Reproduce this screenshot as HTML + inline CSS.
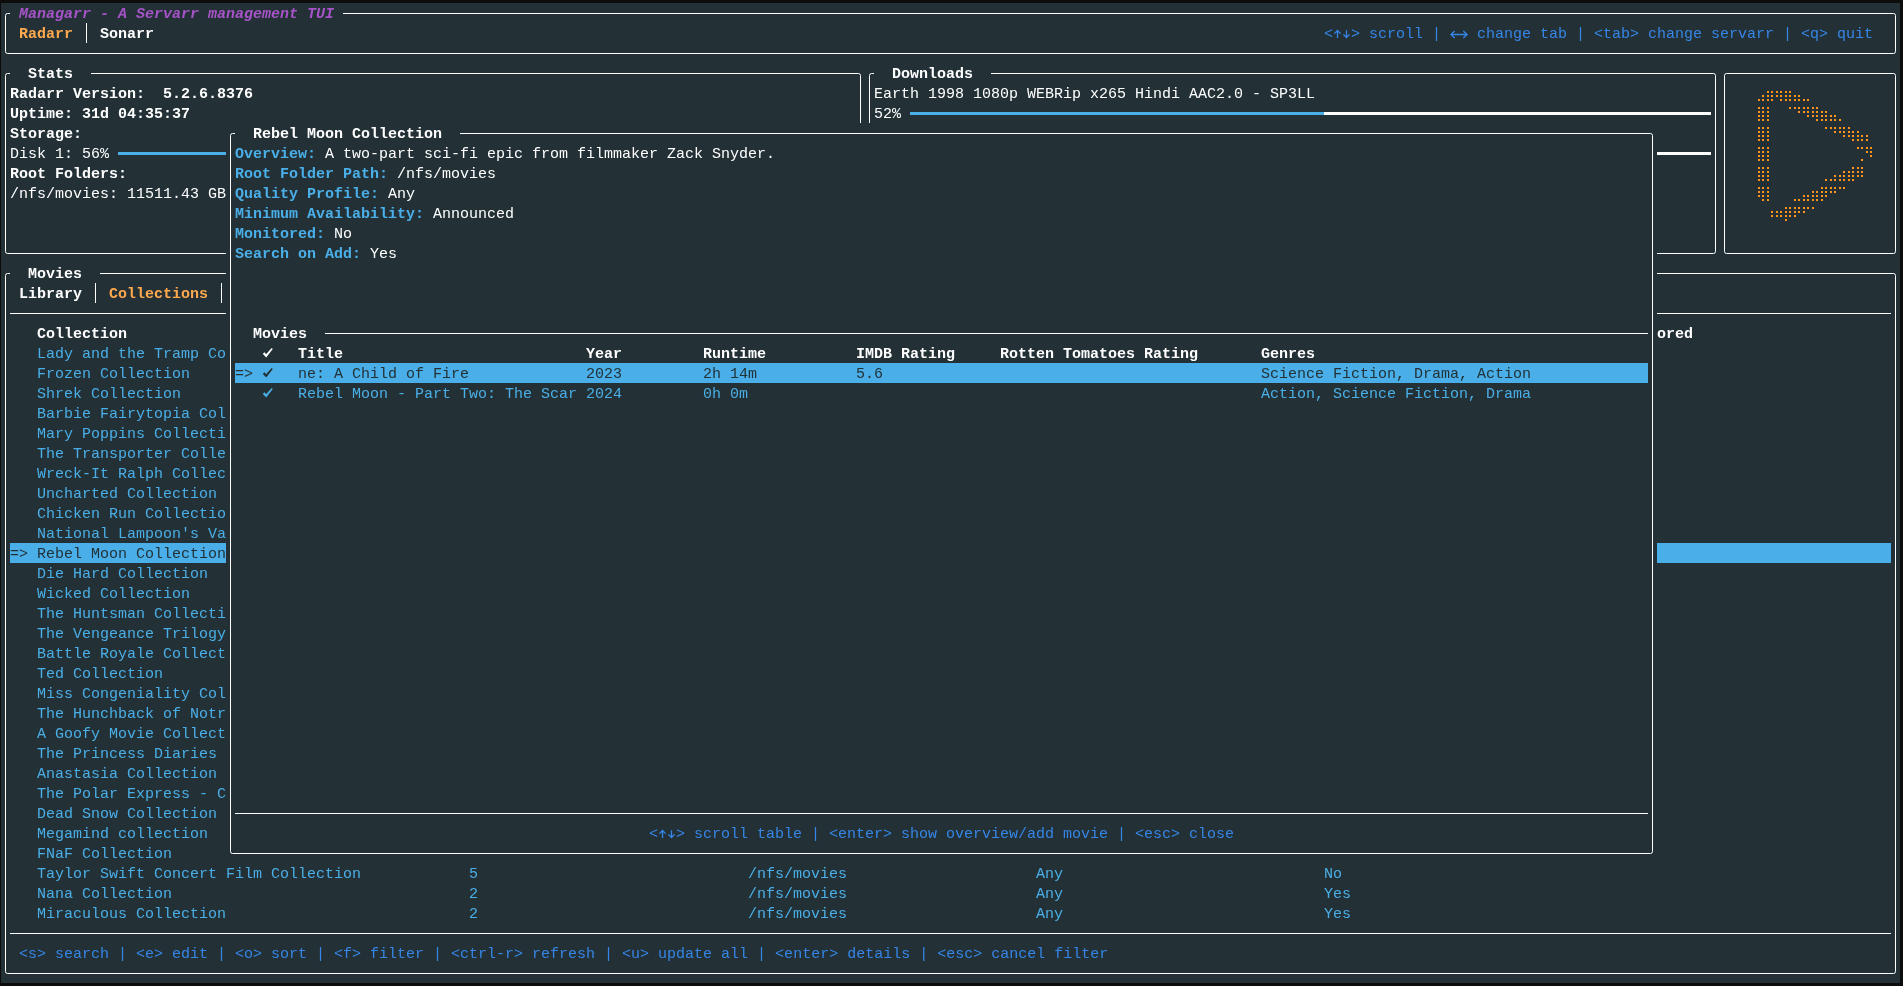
<!DOCTYPE html>
<html><head><meta charset="utf-8"><style>
html,body{margin:0;padding:0;background:#0c0c0c;width:1903px;height:986px;overflow:hidden}
#term{position:absolute;left:1px;top:3px;width:1899px;height:980px;background:#233136}
.t{will-change:transform;position:absolute;white-space:pre;font-family:"Liberation Mono",monospace;font-size:15px;line-height:20px;height:20px}
</style></head><body>
<div id="term"></div>
<div style="position:absolute;left:10px;top:543px;width:216px;height:20px;background:#4aafe8"></div>
<div style="position:absolute;left:1657px;top:543px;width:234px;height:20px;background:#4aafe8"></div>
<svg width="1903" height="986" style="position:absolute;left:0;top:0" shape-rendering="crispEdges"><path d="M5.5 23 V15.5 Q5.5 13.5 7.5 13.5 H10" fill="none" stroke="#ffffff" stroke-width="1" shape-rendering="geometricPrecision"/><path d="M1891 13.5 H1893.5 Q1895.5 13.5 1895.5 15.5 V23" fill="none" stroke="#ffffff" stroke-width="1" shape-rendering="geometricPrecision"/><path d="M5.5 43 V51.5 Q5.5 53.5 7.5 53.5 H10" fill="none" stroke="#ffffff" stroke-width="1" shape-rendering="geometricPrecision"/><path d="M1891 53.5 H1893.5 Q1895.5 53.5 1895.5 51.5 V43" fill="none" stroke="#ffffff" stroke-width="1" shape-rendering="geometricPrecision"/><rect x="343" y="13" width="1548" height="1" fill="#ffffff"/><rect x="10" y="53" width="1881" height="1" fill="#ffffff"/><rect x="5" y="23" width="1" height="20" fill="#ffffff"/><rect x="1895" y="23" width="1" height="20" fill="#ffffff"/><rect x="86" y="23" width="1" height="20" fill="#ffffff"/><path d="M5.5 83 V75.5 Q5.5 73.5 7.5 73.5 H10" fill="none" stroke="#ffffff" stroke-width="1" shape-rendering="geometricPrecision"/><path d="M856 73.5 H858.5 Q860.5 73.5 860.5 75.5 V83" fill="none" stroke="#ffffff" stroke-width="1" shape-rendering="geometricPrecision"/><path d="M5.5 243 V251.5 Q5.5 253.5 7.5 253.5 H10" fill="none" stroke="#ffffff" stroke-width="1" shape-rendering="geometricPrecision"/><path d="M856 253.5 H858.5 Q860.5 253.5 860.5 251.5 V243" fill="none" stroke="#ffffff" stroke-width="1" shape-rendering="geometricPrecision"/><rect x="91" y="73" width="765" height="1" fill="#ffffff"/><rect x="10" y="253" width="846" height="1" fill="#ffffff"/><rect x="5" y="83" width="1" height="160" fill="#ffffff"/><rect x="860" y="83" width="1" height="160" fill="#ffffff"/><path d="M869.5 83 V75.5 Q869.5 73.5 871.5 73.5 H874" fill="none" stroke="#ffffff" stroke-width="1" shape-rendering="geometricPrecision"/><path d="M1711 73.5 H1713.5 Q1715.5 73.5 1715.5 75.5 V83" fill="none" stroke="#ffffff" stroke-width="1" shape-rendering="geometricPrecision"/><path d="M869.5 243 V251.5 Q869.5 253.5 871.5 253.5 H874" fill="none" stroke="#ffffff" stroke-width="1" shape-rendering="geometricPrecision"/><path d="M1711 253.5 H1713.5 Q1715.5 253.5 1715.5 251.5 V243" fill="none" stroke="#ffffff" stroke-width="1" shape-rendering="geometricPrecision"/><rect x="991" y="73" width="720" height="1" fill="#ffffff"/><rect x="874" y="253" width="837" height="1" fill="#ffffff"/><rect x="869" y="83" width="1" height="160" fill="#ffffff"/><rect x="1715" y="83" width="1" height="160" fill="#ffffff"/><path d="M1724.5 83 V75.5 Q1724.5 73.5 1726.5 73.5 H1729" fill="none" stroke="#ffffff" stroke-width="1" shape-rendering="geometricPrecision"/><path d="M1891 73.5 H1893.5 Q1895.5 73.5 1895.5 75.5 V83" fill="none" stroke="#ffffff" stroke-width="1" shape-rendering="geometricPrecision"/><path d="M1724.5 243 V251.5 Q1724.5 253.5 1726.5 253.5 H1729" fill="none" stroke="#ffffff" stroke-width="1" shape-rendering="geometricPrecision"/><path d="M1891 253.5 H1893.5 Q1895.5 253.5 1895.5 251.5 V243" fill="none" stroke="#ffffff" stroke-width="1" shape-rendering="geometricPrecision"/><rect x="1729" y="73" width="162" height="1" fill="#ffffff"/><rect x="1729" y="253" width="162" height="1" fill="#ffffff"/><rect x="1724" y="83" width="1" height="160" fill="#ffffff"/><rect x="1895" y="83" width="1" height="160" fill="#ffffff"/><path d="M5.5 283 V275.5 Q5.5 273.5 7.5 273.5 H10" fill="none" stroke="#ffffff" stroke-width="1" shape-rendering="geometricPrecision"/><path d="M1891 273.5 H1893.5 Q1895.5 273.5 1895.5 275.5 V283" fill="none" stroke="#ffffff" stroke-width="1" shape-rendering="geometricPrecision"/><path d="M5.5 963 V971.5 Q5.5 973.5 7.5 973.5 H10" fill="none" stroke="#ffffff" stroke-width="1" shape-rendering="geometricPrecision"/><path d="M1891 973.5 H1893.5 Q1895.5 973.5 1895.5 971.5 V963" fill="none" stroke="#ffffff" stroke-width="1" shape-rendering="geometricPrecision"/><rect x="100" y="273" width="1791" height="1" fill="#ffffff"/><rect x="10" y="973" width="1881" height="1" fill="#ffffff"/><rect x="5" y="283" width="1" height="680" fill="#ffffff"/><rect x="1895" y="283" width="1" height="680" fill="#ffffff"/><rect x="95" y="283" width="1" height="20" fill="#ffffff"/><rect x="221" y="283" width="1" height="20" fill="#ffffff"/><rect x="10" y="313" width="1881" height="1" fill="#ffffff"/><rect x="10" y="933" width="1881" height="1" fill="#ffffff"/><path d="M1337.5 30.3 V38 M1334.4 33.6 L1337.5 30.5 L1340.6 33.6" fill="none" stroke="#3586e8" stroke-width="1.3" shape-rendering="geometricPrecision"/><path d="M1346.5 30.2 V37.6 M1343.4 34.4 L1346.5 37.5 L1349.6 34.4" fill="none" stroke="#3586e8" stroke-width="1.3" shape-rendering="geometricPrecision"/><path d="M1450.8 34.5 H1467.2 M1454.7 31 L1450.9 34.5 L1454.7 38 M1463.3 31 L1467.1 34.5 L1463.3 38" fill="none" stroke="#3586e8" stroke-width="1.3" shape-rendering="geometricPrecision"/><rect x="118" y="152" width="405" height="3" fill="#4aafe8"/><rect x="523" y="152" width="333" height="3" fill="#ffffff"/><rect x="910" y="112" width="414" height="3" fill="#4aafe8"/><rect x="1324" y="112" width="387" height="3" fill="#ffffff"/><rect x="1657" y="152" width="54" height="3" fill="#ffffff"/><rect x="1762" y="95" width="2" height="2" fill="#ff9418"/><rect x="1758" y="99" width="2" height="2" fill="#ff9418"/><rect x="1762" y="99" width="2" height="2" fill="#ff9418"/><rect x="1767" y="91" width="2" height="2" fill="#ff9418"/><rect x="1771" y="91" width="2" height="2" fill="#ff9418"/><rect x="1767" y="95" width="2" height="2" fill="#ff9418"/><rect x="1771" y="95" width="2" height="2" fill="#ff9418"/><rect x="1767" y="99" width="2" height="2" fill="#ff9418"/><rect x="1771" y="99" width="2" height="2" fill="#ff9418"/><rect x="1776" y="91" width="2" height="2" fill="#ff9418"/><rect x="1780" y="91" width="2" height="2" fill="#ff9418"/><rect x="1776" y="95" width="2" height="2" fill="#ff9418"/><rect x="1780" y="95" width="2" height="2" fill="#ff9418"/><rect x="1780" y="99" width="2" height="2" fill="#ff9418"/><rect x="1785" y="91" width="2" height="2" fill="#ff9418"/><rect x="1789" y="91" width="2" height="2" fill="#ff9418"/><rect x="1785" y="95" width="2" height="2" fill="#ff9418"/><rect x="1789" y="95" width="2" height="2" fill="#ff9418"/><rect x="1785" y="99" width="2" height="2" fill="#ff9418"/><rect x="1789" y="99" width="2" height="2" fill="#ff9418"/><rect x="1794" y="95" width="2" height="2" fill="#ff9418"/><rect x="1798" y="95" width="2" height="2" fill="#ff9418"/><rect x="1794" y="99" width="2" height="2" fill="#ff9418"/><rect x="1798" y="99" width="2" height="2" fill="#ff9418"/><rect x="1803" y="99" width="2" height="2" fill="#ff9418"/><rect x="1807" y="99" width="2" height="2" fill="#ff9418"/><rect x="1758" y="107" width="2" height="2" fill="#ff9418"/><rect x="1758" y="111" width="2" height="2" fill="#ff9418"/><rect x="1758" y="115" width="2" height="2" fill="#ff9418"/><rect x="1758" y="119" width="2" height="2" fill="#ff9418"/><rect x="1762" y="107" width="2" height="2" fill="#ff9418"/><rect x="1762" y="111" width="2" height="2" fill="#ff9418"/><rect x="1762" y="115" width="2" height="2" fill="#ff9418"/><rect x="1762" y="119" width="2" height="2" fill="#ff9418"/><rect x="1767" y="107" width="2" height="2" fill="#ff9418"/><rect x="1767" y="111" width="2" height="2" fill="#ff9418"/><rect x="1767" y="115" width="2" height="2" fill="#ff9418"/><rect x="1767" y="119" width="2" height="2" fill="#ff9418"/><rect x="1789" y="107" width="2" height="2" fill="#ff9418"/><rect x="1794" y="107" width="2" height="2" fill="#ff9418"/><rect x="1798" y="107" width="2" height="2" fill="#ff9418"/><rect x="1798" y="111" width="2" height="2" fill="#ff9418"/><rect x="1803" y="107" width="2" height="2" fill="#ff9418"/><rect x="1807" y="107" width="2" height="2" fill="#ff9418"/><rect x="1803" y="111" width="2" height="2" fill="#ff9418"/><rect x="1807" y="111" width="2" height="2" fill="#ff9418"/><rect x="1807" y="115" width="2" height="2" fill="#ff9418"/><rect x="1812" y="107" width="2" height="2" fill="#ff9418"/><rect x="1816" y="107" width="2" height="2" fill="#ff9418"/><rect x="1812" y="111" width="2" height="2" fill="#ff9418"/><rect x="1816" y="111" width="2" height="2" fill="#ff9418"/><rect x="1812" y="115" width="2" height="2" fill="#ff9418"/><rect x="1816" y="115" width="2" height="2" fill="#ff9418"/><rect x="1816" y="119" width="2" height="2" fill="#ff9418"/><rect x="1821" y="111" width="2" height="2" fill="#ff9418"/><rect x="1825" y="111" width="2" height="2" fill="#ff9418"/><rect x="1821" y="115" width="2" height="2" fill="#ff9418"/><rect x="1825" y="115" width="2" height="2" fill="#ff9418"/><rect x="1821" y="119" width="2" height="2" fill="#ff9418"/><rect x="1825" y="119" width="2" height="2" fill="#ff9418"/><rect x="1830" y="115" width="2" height="2" fill="#ff9418"/><rect x="1834" y="115" width="2" height="2" fill="#ff9418"/><rect x="1830" y="119" width="2" height="2" fill="#ff9418"/><rect x="1834" y="119" width="2" height="2" fill="#ff9418"/><rect x="1839" y="119" width="2" height="2" fill="#ff9418"/><rect x="1758" y="127" width="2" height="2" fill="#ff9418"/><rect x="1758" y="131" width="2" height="2" fill="#ff9418"/><rect x="1758" y="135" width="2" height="2" fill="#ff9418"/><rect x="1758" y="139" width="2" height="2" fill="#ff9418"/><rect x="1762" y="127" width="2" height="2" fill="#ff9418"/><rect x="1762" y="131" width="2" height="2" fill="#ff9418"/><rect x="1762" y="135" width="2" height="2" fill="#ff9418"/><rect x="1762" y="139" width="2" height="2" fill="#ff9418"/><rect x="1767" y="127" width="2" height="2" fill="#ff9418"/><rect x="1767" y="131" width="2" height="2" fill="#ff9418"/><rect x="1767" y="135" width="2" height="2" fill="#ff9418"/><rect x="1767" y="139" width="2" height="2" fill="#ff9418"/><rect x="1825" y="127" width="2" height="2" fill="#ff9418"/><rect x="1830" y="127" width="2" height="2" fill="#ff9418"/><rect x="1834" y="127" width="2" height="2" fill="#ff9418"/><rect x="1834" y="131" width="2" height="2" fill="#ff9418"/><rect x="1839" y="127" width="2" height="2" fill="#ff9418"/><rect x="1843" y="127" width="2" height="2" fill="#ff9418"/><rect x="1839" y="131" width="2" height="2" fill="#ff9418"/><rect x="1843" y="131" width="2" height="2" fill="#ff9418"/><rect x="1843" y="135" width="2" height="2" fill="#ff9418"/><rect x="1848" y="127" width="2" height="2" fill="#ff9418"/><rect x="1848" y="131" width="2" height="2" fill="#ff9418"/><rect x="1852" y="131" width="2" height="2" fill="#ff9418"/><rect x="1848" y="135" width="2" height="2" fill="#ff9418"/><rect x="1852" y="135" width="2" height="2" fill="#ff9418"/><rect x="1852" y="139" width="2" height="2" fill="#ff9418"/><rect x="1857" y="131" width="2" height="2" fill="#ff9418"/><rect x="1857" y="135" width="2" height="2" fill="#ff9418"/><rect x="1861" y="135" width="2" height="2" fill="#ff9418"/><rect x="1857" y="139" width="2" height="2" fill="#ff9418"/><rect x="1861" y="139" width="2" height="2" fill="#ff9418"/><rect x="1866" y="135" width="2" height="2" fill="#ff9418"/><rect x="1866" y="139" width="2" height="2" fill="#ff9418"/><rect x="1758" y="147" width="2" height="2" fill="#ff9418"/><rect x="1758" y="151" width="2" height="2" fill="#ff9418"/><rect x="1758" y="155" width="2" height="2" fill="#ff9418"/><rect x="1758" y="159" width="2" height="2" fill="#ff9418"/><rect x="1762" y="147" width="2" height="2" fill="#ff9418"/><rect x="1762" y="151" width="2" height="2" fill="#ff9418"/><rect x="1762" y="155" width="2" height="2" fill="#ff9418"/><rect x="1762" y="159" width="2" height="2" fill="#ff9418"/><rect x="1767" y="147" width="2" height="2" fill="#ff9418"/><rect x="1767" y="151" width="2" height="2" fill="#ff9418"/><rect x="1767" y="155" width="2" height="2" fill="#ff9418"/><rect x="1767" y="159" width="2" height="2" fill="#ff9418"/><rect x="1857" y="147" width="2" height="2" fill="#ff9418"/><rect x="1861" y="147" width="2" height="2" fill="#ff9418"/><rect x="1861" y="159" width="2" height="2" fill="#ff9418"/><rect x="1866" y="147" width="2" height="2" fill="#ff9418"/><rect x="1870" y="147" width="2" height="2" fill="#ff9418"/><rect x="1866" y="151" width="2" height="2" fill="#ff9418"/><rect x="1870" y="151" width="2" height="2" fill="#ff9418"/><rect x="1870" y="155" width="2" height="2" fill="#ff9418"/><rect x="1758" y="167" width="2" height="2" fill="#ff9418"/><rect x="1758" y="171" width="2" height="2" fill="#ff9418"/><rect x="1758" y="175" width="2" height="2" fill="#ff9418"/><rect x="1758" y="179" width="2" height="2" fill="#ff9418"/><rect x="1762" y="167" width="2" height="2" fill="#ff9418"/><rect x="1762" y="171" width="2" height="2" fill="#ff9418"/><rect x="1762" y="175" width="2" height="2" fill="#ff9418"/><rect x="1762" y="179" width="2" height="2" fill="#ff9418"/><rect x="1767" y="167" width="2" height="2" fill="#ff9418"/><rect x="1767" y="171" width="2" height="2" fill="#ff9418"/><rect x="1767" y="175" width="2" height="2" fill="#ff9418"/><rect x="1767" y="179" width="2" height="2" fill="#ff9418"/><rect x="1825" y="179" width="2" height="2" fill="#ff9418"/><rect x="1834" y="175" width="2" height="2" fill="#ff9418"/><rect x="1830" y="179" width="2" height="2" fill="#ff9418"/><rect x="1834" y="179" width="2" height="2" fill="#ff9418"/><rect x="1843" y="171" width="2" height="2" fill="#ff9418"/><rect x="1839" y="175" width="2" height="2" fill="#ff9418"/><rect x="1843" y="175" width="2" height="2" fill="#ff9418"/><rect x="1839" y="179" width="2" height="2" fill="#ff9418"/><rect x="1843" y="179" width="2" height="2" fill="#ff9418"/><rect x="1852" y="167" width="2" height="2" fill="#ff9418"/><rect x="1848" y="171" width="2" height="2" fill="#ff9418"/><rect x="1852" y="171" width="2" height="2" fill="#ff9418"/><rect x="1848" y="175" width="2" height="2" fill="#ff9418"/><rect x="1852" y="175" width="2" height="2" fill="#ff9418"/><rect x="1848" y="179" width="2" height="2" fill="#ff9418"/><rect x="1852" y="179" width="2" height="2" fill="#ff9418"/><rect x="1857" y="167" width="2" height="2" fill="#ff9418"/><rect x="1861" y="167" width="2" height="2" fill="#ff9418"/><rect x="1857" y="171" width="2" height="2" fill="#ff9418"/><rect x="1861" y="171" width="2" height="2" fill="#ff9418"/><rect x="1857" y="175" width="2" height="2" fill="#ff9418"/><rect x="1861" y="175" width="2" height="2" fill="#ff9418"/><rect x="1758" y="187" width="2" height="2" fill="#ff9418"/><rect x="1762" y="187" width="2" height="2" fill="#ff9418"/><rect x="1758" y="191" width="2" height="2" fill="#ff9418"/><rect x="1762" y="191" width="2" height="2" fill="#ff9418"/><rect x="1758" y="195" width="2" height="2" fill="#ff9418"/><rect x="1762" y="195" width="2" height="2" fill="#ff9418"/><rect x="1762" y="199" width="2" height="2" fill="#ff9418"/><rect x="1767" y="187" width="2" height="2" fill="#ff9418"/><rect x="1767" y="191" width="2" height="2" fill="#ff9418"/><rect x="1767" y="195" width="2" height="2" fill="#ff9418"/><rect x="1767" y="199" width="2" height="2" fill="#ff9418"/><rect x="1794" y="199" width="2" height="2" fill="#ff9418"/><rect x="1798" y="199" width="2" height="2" fill="#ff9418"/><rect x="1803" y="195" width="2" height="2" fill="#ff9418"/><rect x="1807" y="195" width="2" height="2" fill="#ff9418"/><rect x="1803" y="199" width="2" height="2" fill="#ff9418"/><rect x="1807" y="199" width="2" height="2" fill="#ff9418"/><rect x="1812" y="191" width="2" height="2" fill="#ff9418"/><rect x="1816" y="191" width="2" height="2" fill="#ff9418"/><rect x="1812" y="195" width="2" height="2" fill="#ff9418"/><rect x="1816" y="195" width="2" height="2" fill="#ff9418"/><rect x="1812" y="199" width="2" height="2" fill="#ff9418"/><rect x="1816" y="199" width="2" height="2" fill="#ff9418"/><rect x="1821" y="187" width="2" height="2" fill="#ff9418"/><rect x="1825" y="187" width="2" height="2" fill="#ff9418"/><rect x="1821" y="191" width="2" height="2" fill="#ff9418"/><rect x="1825" y="191" width="2" height="2" fill="#ff9418"/><rect x="1821" y="195" width="2" height="2" fill="#ff9418"/><rect x="1825" y="195" width="2" height="2" fill="#ff9418"/><rect x="1821" y="199" width="2" height="2" fill="#ff9418"/><rect x="1830" y="187" width="2" height="2" fill="#ff9418"/><rect x="1834" y="187" width="2" height="2" fill="#ff9418"/><rect x="1830" y="191" width="2" height="2" fill="#ff9418"/><rect x="1834" y="191" width="2" height="2" fill="#ff9418"/><rect x="1839" y="187" width="2" height="2" fill="#ff9418"/><rect x="1843" y="187" width="2" height="2" fill="#ff9418"/><rect x="1771" y="211" width="2" height="2" fill="#ff9418"/><rect x="1771" y="215" width="2" height="2" fill="#ff9418"/><rect x="1776" y="211" width="2" height="2" fill="#ff9418"/><rect x="1780" y="211" width="2" height="2" fill="#ff9418"/><rect x="1776" y="215" width="2" height="2" fill="#ff9418"/><rect x="1780" y="215" width="2" height="2" fill="#ff9418"/><rect x="1785" y="207" width="2" height="2" fill="#ff9418"/><rect x="1789" y="207" width="2" height="2" fill="#ff9418"/><rect x="1785" y="211" width="2" height="2" fill="#ff9418"/><rect x="1789" y="211" width="2" height="2" fill="#ff9418"/><rect x="1785" y="215" width="2" height="2" fill="#ff9418"/><rect x="1789" y="215" width="2" height="2" fill="#ff9418"/><rect x="1785" y="219" width="2" height="2" fill="#ff9418"/><rect x="1794" y="207" width="2" height="2" fill="#ff9418"/><rect x="1798" y="207" width="2" height="2" fill="#ff9418"/><rect x="1794" y="211" width="2" height="2" fill="#ff9418"/><rect x="1798" y="211" width="2" height="2" fill="#ff9418"/><rect x="1794" y="215" width="2" height="2" fill="#ff9418"/><rect x="1803" y="207" width="2" height="2" fill="#ff9418"/><rect x="1807" y="207" width="2" height="2" fill="#ff9418"/><rect x="1803" y="211" width="2" height="2" fill="#ff9418"/><rect x="1812" y="207" width="2" height="2" fill="#ff9418"/></svg>
<div class="t" style="left:19px;top:5px;color:#a653c8;font-weight:bold;font-style:italic">Managarr - A Servarr management TUI</div>
<div class="t" style="left:19px;top:25px;color:#ffa94e;font-weight:bold">Radarr</div>
<div class="t" style="left:100px;top:25px;color:#ffffff;font-weight:bold">Sonarr</div>
<div class="t" style="left:1324px;top:25px;color:#3586e8">&lt;  &gt; scroll |</div>
<div class="t" style="left:1468px;top:25px;color:#3586e8"> change tab | &lt;tab&gt; change servarr | &lt;q&gt; quit</div>
<div class="t" style="left:28px;top:65px;color:#ffffff;font-weight:bold">Stats</div>
<div class="t" style="left:10px;top:85px;color:#ffffff;font-weight:bold">Radarr Version:  5.2.6.8376</div>
<div class="t" style="left:10px;top:105px;color:#ffffff;font-weight:bold">Uptime: 31d 04:35:37</div>
<div class="t" style="left:10px;top:125px;color:#ffffff;font-weight:bold">Storage:</div>
<div class="t" style="left:10px;top:145px;color:#ffffff">Disk 1: 56%</div>
<div class="t" style="left:10px;top:165px;color:#ffffff;font-weight:bold">Root Folders:</div>
<div class="t" style="left:10px;top:185px;color:#ffffff">/nfs/movies: 11511.43 GB</div>
<div class="t" style="left:892px;top:65px;color:#ffffff;font-weight:bold">Downloads</div>
<div class="t" style="left:874px;top:85px;color:#ffffff">Earth 1998 1080p WEBRip x265 Hindi AAC2.0 - SP3LL</div>
<div class="t" style="left:874px;top:105px;color:#ffffff">52%</div>
<div class="t" style="left:28px;top:265px;color:#ffffff;font-weight:bold">Movies</div>
<div class="t" style="left:19px;top:285px;color:#ffffff;font-weight:bold">Library</div>
<div class="t" style="left:109px;top:285px;color:#ffa94e;font-weight:bold">Collections</div>
<div class="t" style="left:37px;top:325px;color:#ffffff;font-weight:bold">Collection</div>
<div class="t" style="left:1657px;top:325px;color:#ffffff;font-weight:bold">ored</div>
<div class="t" style="left:37px;top:345px;color:#4aafe8">Lady and the Tramp Co</div>
<div class="t" style="left:37px;top:365px;color:#4aafe8">Frozen Collection</div>
<div class="t" style="left:37px;top:385px;color:#4aafe8">Shrek Collection</div>
<div class="t" style="left:37px;top:405px;color:#4aafe8">Barbie Fairytopia Col</div>
<div class="t" style="left:37px;top:425px;color:#4aafe8">Mary Poppins Collecti</div>
<div class="t" style="left:37px;top:445px;color:#4aafe8">The Transporter Colle</div>
<div class="t" style="left:37px;top:465px;color:#4aafe8">Wreck-It Ralph Collec</div>
<div class="t" style="left:37px;top:485px;color:#4aafe8">Uncharted Collection</div>
<div class="t" style="left:37px;top:505px;color:#4aafe8">Chicken Run Collectio</div>
<div class="t" style="left:37px;top:525px;color:#4aafe8">National Lampoon&#x27;s Va</div>
<div class="t" style="left:10px;top:545px;color:#233136">=&gt; Rebel Moon Collection</div>
<div class="t" style="left:37px;top:565px;color:#4aafe8">Die Hard Collection</div>
<div class="t" style="left:37px;top:585px;color:#4aafe8">Wicked Collection</div>
<div class="t" style="left:37px;top:605px;color:#4aafe8">The Huntsman Collecti</div>
<div class="t" style="left:37px;top:625px;color:#4aafe8">The Vengeance Trilogy</div>
<div class="t" style="left:37px;top:645px;color:#4aafe8">Battle Royale Collect</div>
<div class="t" style="left:37px;top:665px;color:#4aafe8">Ted Collection</div>
<div class="t" style="left:37px;top:685px;color:#4aafe8">Miss Congeniality Col</div>
<div class="t" style="left:37px;top:705px;color:#4aafe8">The Hunchback of Notr</div>
<div class="t" style="left:37px;top:725px;color:#4aafe8">A Goofy Movie Collect</div>
<div class="t" style="left:37px;top:745px;color:#4aafe8">The Princess Diaries</div>
<div class="t" style="left:37px;top:765px;color:#4aafe8">Anastasia Collection</div>
<div class="t" style="left:37px;top:785px;color:#4aafe8">The Polar Express - C</div>
<div class="t" style="left:37px;top:805px;color:#4aafe8">Dead Snow Collection</div>
<div class="t" style="left:37px;top:825px;color:#4aafe8">Megamind collection</div>
<div class="t" style="left:37px;top:845px;color:#4aafe8">FNaF Collection</div>
<div class="t" style="left:37px;top:865px;color:#4aafe8">Taylor Swift Concert Film Collection</div>
<div class="t" style="left:469px;top:865px;color:#4aafe8">5</div>
<div class="t" style="left:748px;top:865px;color:#4aafe8">/nfs/movies</div>
<div class="t" style="left:1036px;top:865px;color:#4aafe8">Any</div>
<div class="t" style="left:1324px;top:865px;color:#4aafe8">No</div>
<div class="t" style="left:37px;top:885px;color:#4aafe8">Nana Collection</div>
<div class="t" style="left:469px;top:885px;color:#4aafe8">2</div>
<div class="t" style="left:748px;top:885px;color:#4aafe8">/nfs/movies</div>
<div class="t" style="left:1036px;top:885px;color:#4aafe8">Any</div>
<div class="t" style="left:1324px;top:885px;color:#4aafe8">Yes</div>
<div class="t" style="left:37px;top:905px;color:#4aafe8">Miraculous Collection</div>
<div class="t" style="left:469px;top:905px;color:#4aafe8">2</div>
<div class="t" style="left:748px;top:905px;color:#4aafe8">/nfs/movies</div>
<div class="t" style="left:1036px;top:905px;color:#4aafe8">Any</div>
<div class="t" style="left:1324px;top:905px;color:#4aafe8">Yes</div>
<div class="t" style="left:19px;top:945px;color:#3586e8">&lt;s&gt; search | &lt;e&gt; edit | &lt;o&gt; sort | &lt;f&gt; filter | &lt;ctrl-r&gt; refresh | &lt;u&gt; update all | &lt;enter&gt; details | &lt;esc&gt; cancel filter</div>
<div style="position:absolute;left:226px;top:123px;width:1431px;height:740px;background:#233136"></div>
<div style="position:absolute;left:235px;top:363px;width:1413px;height:20px;background:#4aafe8"></div>
<svg width="1903" height="986" style="position:absolute;left:0;top:0" shape-rendering="crispEdges"><path d="M230.5 143 V135.5 Q230.5 133.5 232.5 133.5 H235" fill="none" stroke="#ffffff" stroke-width="1" shape-rendering="geometricPrecision"/><path d="M1648 133.5 H1650.5 Q1652.5 133.5 1652.5 135.5 V143" fill="none" stroke="#ffffff" stroke-width="1" shape-rendering="geometricPrecision"/><path d="M230.5 843 V851.5 Q230.5 853.5 232.5 853.5 H235" fill="none" stroke="#ffffff" stroke-width="1" shape-rendering="geometricPrecision"/><path d="M1648 853.5 H1650.5 Q1652.5 853.5 1652.5 851.5 V843" fill="none" stroke="#ffffff" stroke-width="1" shape-rendering="geometricPrecision"/><rect x="460" y="133" width="1188" height="1" fill="#ffffff"/><rect x="235" y="853" width="1413" height="1" fill="#ffffff"/><rect x="230" y="143" width="1" height="700" fill="#ffffff"/><rect x="1652" y="143" width="1" height="700" fill="#ffffff"/><rect x="325" y="333" width="1323" height="1" fill="#ffffff"/><rect x="235" y="813" width="1413" height="1" fill="#ffffff"/><path d="M262.7 353.8 L264.7 352.2 L266.0 354.3 L271.7 348.0 L272.8 349.1 L266.2 357.6 Z" fill="#ffffff" shape-rendering="geometricPrecision"/><path d="M262.7 373.8 L264.7 372.2 L266.0 374.3 L271.7 368.0 L272.8 369.1 L266.2 377.6 Z" fill="#233136" shape-rendering="geometricPrecision"/><path d="M262.7 393.8 L264.7 392.2 L266.0 394.3 L271.7 388.0 L272.8 389.1 L266.2 397.6 Z" fill="#4aafe8" shape-rendering="geometricPrecision"/><path d="M662.5 830.3 V838 M659.4 833.6 L662.5 830.5 L665.6 833.6" fill="none" stroke="#3586e8" stroke-width="1.3" shape-rendering="geometricPrecision"/><path d="M671.5 830.2 V837.6 M668.4 834.4 L671.5 837.5 L674.6 834.4" fill="none" stroke="#3586e8" stroke-width="1.3" shape-rendering="geometricPrecision"/></svg>
<div class="t" style="left:253px;top:125px;color:#ffffff;font-weight:bold">Rebel Moon Collection</div>
<div class="t" style="left:235px;top:145px;color:#4aafe8;font-weight:bold">Overview:</div>
<div class="t" style="left:316px;top:145px;color:#ffffff"> A two-part sci-fi epic from filmmaker Zack Snyder.</div>
<div class="t" style="left:235px;top:165px;color:#4aafe8;font-weight:bold">Root Folder Path:</div>
<div class="t" style="left:388px;top:165px;color:#ffffff"> /nfs/movies</div>
<div class="t" style="left:235px;top:185px;color:#4aafe8;font-weight:bold">Quality Profile:</div>
<div class="t" style="left:379px;top:185px;color:#ffffff"> Any</div>
<div class="t" style="left:235px;top:205px;color:#4aafe8;font-weight:bold">Minimum Availability:</div>
<div class="t" style="left:424px;top:205px;color:#ffffff"> Announced</div>
<div class="t" style="left:235px;top:225px;color:#4aafe8;font-weight:bold">Monitored:</div>
<div class="t" style="left:325px;top:225px;color:#ffffff"> No</div>
<div class="t" style="left:235px;top:245px;color:#4aafe8;font-weight:bold">Search on Add:</div>
<div class="t" style="left:361px;top:245px;color:#ffffff"> Yes</div>
<div class="t" style="left:253px;top:325px;color:#ffffff;font-weight:bold">Movies</div>
<div class="t" style="left:586px;top:345px;color:#ffffff;font-weight:bold">Year</div>
<div class="t" style="left:298px;top:345px;color:#ffffff;font-weight:bold">Title</div>
<div class="t" style="left:703px;top:345px;color:#ffffff;font-weight:bold">Runtime</div>
<div class="t" style="left:856px;top:345px;color:#ffffff;font-weight:bold">IMDB Rating</div>
<div class="t" style="left:1000px;top:345px;color:#ffffff;font-weight:bold">Rotten Tomatoes Rating</div>
<div class="t" style="left:1261px;top:345px;color:#ffffff;font-weight:bold">Genres</div>
<div class="t" style="left:235px;top:365px;color:#233136">=&gt;</div>
<div class="t" style="left:298px;top:365px;color:#233136">ne: A Child of Fire</div>
<div class="t" style="left:586px;top:365px;color:#233136">2023</div>
<div class="t" style="left:703px;top:365px;color:#233136">2h 14m</div>
<div class="t" style="left:856px;top:365px;color:#233136">5.6</div>
<div class="t" style="left:1261px;top:365px;color:#233136">Science Fiction, Drama, Action</div>
<div class="t" style="left:298px;top:385px;color:#4aafe8">Rebel Moon - Part Two: The Scar</div>
<div class="t" style="left:586px;top:385px;color:#4aafe8">2024</div>
<div class="t" style="left:703px;top:385px;color:#4aafe8">0h 0m</div>
<div class="t" style="left:1261px;top:385px;color:#4aafe8">Action, Science Fiction, Drama</div>
<div class="t" style="left:649px;top:825px;color:#3586e8">&lt;  &gt; scroll table | &lt;enter&gt; show overview/add movie | &lt;esc&gt; close</div>
</body></html>
